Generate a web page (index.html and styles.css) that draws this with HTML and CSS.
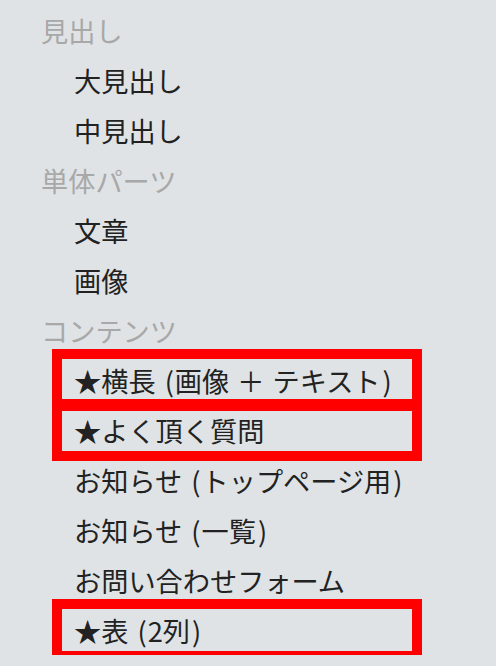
FILE: index.html
```html
<!DOCTYPE html>
<html lang="ja">
<head>
<meta charset="utf-8">
<link rel="stylesheet" href="styles.css">
</head>
<body>
<ul class="menu">
  <li class="group">見出し</li>
  <li class="item">大見出し</li>
  <li class="item">中見出し</li>
  <li class="group">単体パーツ</li>
  <li class="item">文章</li>
  <li class="item">画像</li>
  <li class="group">コンテンツ</li>
  <li class="item marked">★横長 <span class="open">(</span>画像 ＋ テキスト<span class="close">)</span></li>
  <li class="item marked">★よく頂く質問</li>
  <li class="item">お知らせ <span class="open">(</span>トップページ用<span class="close">)</span></li>
  <li class="item">お知らせ <span class="open">(</span>一覧<span class="close">)</span></li>
  <li class="item">お問い合わせフォーム</li>
  <li class="item marked">★表 <span class="open">(</span>2列<span class="close">)</span></li>
</ul>
</body>
</html>
```
FILE: styles.css
```css
html, body {
  margin: 0;
  padding: 0;
  background: #dfe3e5;
}
body {
  font-family: "Noto Sans CJK JP", "Noto Sans", sans-serif;
  font-size: 27.2px;
  color: #222222;
}
.menu {
  list-style: none;
  margin: 0;
  padding: 5px 0 0 0;
}
.menu li {
  height: 50px;
  line-height: 50px;
  white-space: nowrap;
  word-spacing: 2px;
}
.open {
  margin-left: 1px;
  margin-right: 1px;
}
.close {
  margin-left: 2px;
}
.group {
  color: #a8a8a8;
  padding-left: 41px;
}
.item {
  padding-left: 74px;
}
.item.marked {
  margin-left: 58px;
  width: 358px;
  padding-left: 16px;
  box-sizing: border-box;
  outline: 10px solid #ff0000;
  outline-offset: -4px;
}
```
